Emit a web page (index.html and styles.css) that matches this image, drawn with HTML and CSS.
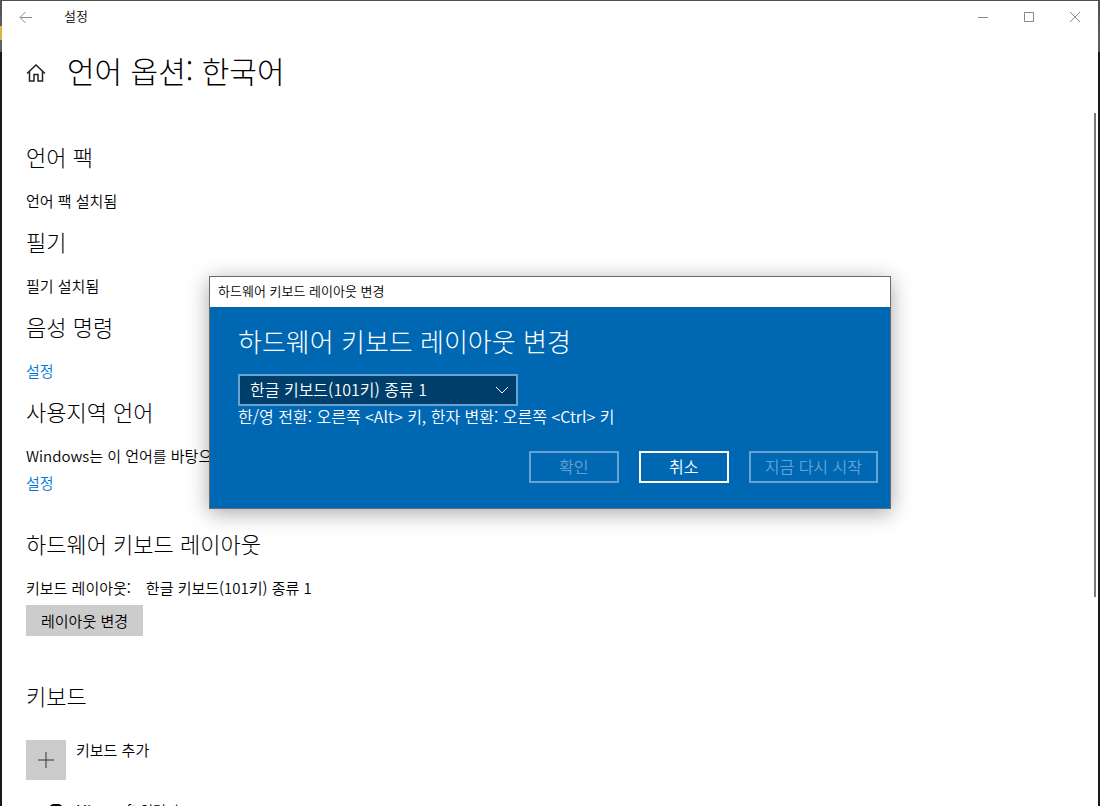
FILE: index.html
```
<!DOCTYPE html>
<html lang="ko">
<head>
    <meta charset="UTF-8">
    <meta name="viewport" content="width=device-width, initial-scale=1.0">
    <title>설정</title>
    <link rel="stylesheet" href="styles.css">
</head>
<body>

<div class="window">
    <header class="titlebar">
        <button type="button" class="back" aria-label="뒤로">
            <svg width="14" height="12" viewBox="0 0 14 12"><path d="M13 6.500H1.500M6.500 1L1 6.500L6.500 12"/></svg>
        </button>
        <span class="app-name">설정</span>
        <div class="window-buttons">
            <button type="button" aria-label="최소화">
                <svg width="10" height="10" viewBox="0 0 10 10"><path d="M0 5.500h10"/></svg>
            </button>
            <button type="button" aria-label="최대화">
                <svg width="10" height="10" viewBox="0 0 10 10"><path d="M.5.5h9v9h-9z"/></svg>
            </button>
            <button type="button" aria-label="닫기">
                <svg width="10" height="10" viewBox="0 0 10 10"><path d="M0 0l10 10M10 0L0 10"/></svg>
            </button>
        </div>
    </header>

    <div class="page-title">
        <svg class="home" width="20" height="18" viewBox="0 0 20 18"><path d="M1 9.500L10 1l9 8.500M3.500 7.500V17h4.500v-6.500h4V17h4.500V7.500"/></svg>
        <h1>언어 옵션: 한국어</h1>
    </div>

    <main class="content">
        <section>
            <h2>언어 팩</h2>
            <p>언어 팩 설치됨</p>
        </section>
        <section>
            <h2>필기</h2>
            <p>필기 설치됨</p>
        </section>
        <section>
            <h2>음성 명령</h2>
            <p><a href="#">설정</a></p>
        </section>
        <section class="region">
            <h2>사용지역 언어</h2>
            <p>Windows는 이 언어를 바탕으로</p>
            <p><a href="#">설정</a></p>
        </section>
        <section class="hardware">
            <h2>하드웨어 키보드 레이아웃</h2>
            <p><span class="label">키보드 레이아웃:</span>한글 키보드(101키) 종류 1</p>
            <button type="button" class="change">레이아웃 변경</button>
        </section>
        <section class="keyboards">
            <h2>키보드</h2>
            <div class="keyboard-row">
                <button type="button" class="add" id="addKeyboard" aria-label="키보드 추가">
                    <svg width="16" height="16" viewBox="0 0 16 16"><path d="M8 0v16M0 8h16"/></svg>
                </button>
                <label for="addKeyboard">키보드 추가</label>
            </div>
            <div class="keyboard-row ime">
                <span class="ime-icon"></span>
                <span>Microsoft 입력기</span>
            </div>
        </section>
    </main>
    <div class="scrollbar"></div>
</div>

<div class="dialog" role="dialog" aria-labelledby="dialogTitle">
    <div class="dialog-bar">하드웨어 키보드 레이아웃 변경</div>
    <form class="dialog-body">
        <h2 id="dialogTitle">하드웨어 키보드 레이아웃 변경</h2>
        <div class="select-wrap">
            <select id="layout" aria-labelledby="dialogTitle">
                <option>한글 키보드(101키) 종류 1</option>
            </select>
            <svg class="chevron" width="14" height="8" viewBox="0 0 14 8"><path d="M1 1l6 6 6-6"/></svg>
        </div>
        <p>한/영 전환: 오른쪽 &lt;Alt&gt; 키, 한자 변환: 오른쪽 &lt;Ctrl&gt; 키</p>
        <div class="actions">
            <button type="button" disabled>확인</button>
            <button type="button">취소</button>
            <button type="button" disabled>지금 다시 시작</button>
        </div>
    </form>
</div>

</body>
</html>
```
FILE: styles.css
```
* {
    box-sizing: border-box;
}

body {
    height: 100vh;
    margin: 0;
    padding: 1px 2px 0;
    overflow: hidden;
    background: linear-gradient(#505050 0, #606060 26px, #d9b44a 26px, #d9b44a 40px, #606060 40px, #606060 52px, #17181a 52px) left / 2px 100% no-repeat,
        linear-gradient(#505050 0, #606060 52px, #17181a 52px);
    color: #000;
    font-family: "Noto Sans CJK KR", sans-serif;
    font-size: 15px;
    font-weight: 350;
    line-height: 27px;
}

h1,
h2,
p {
    margin: 0;
    font-weight: 350;
}

h1,
h2 {
    font-weight: 300;
}

button,
select {
    padding: 0;
    border: 0;
    font: inherit;
}

svg {
    display: block;
    fill: none;
    stroke: currentColor;
}

a {
    color: #0078d7;
    text-decoration: none;
}

.window {
    position: relative;
    height: 100%;
    overflow: hidden;
    background: #fff;
}

.titlebar {
    display: flex;
    align-items: center;
    height: 32px;
    color: #999;
}

.back {
    display: flex;
    align-items: center;
    justify-content: center;
    width: 48px;
    height: 32px;
    background: none;
    color: #888;
}

.app-name {
    margin-left: 14px;
    color: #000;
    font-size: 13px;
    line-height: 20px;
    padding-bottom: 2px;
}

.window-buttons {
    display: flex;
    margin-left: auto;
}

.window-buttons button {
    display: flex;
    align-items: center;
    justify-content: center;
    width: 46px;
    height: 32px;
    background: none;
    color: #888;
}

.page-title {
    display: flex;
    align-items: center;
    gap: 21px;
    height: 76px;
    padding: 0 24px;
}

.home {
    margin-top: 4px;
    color: #222;
    stroke-width: 1.5;
}

h1 {
    padding-bottom: 2px;
    font-size: 30px;
    line-height: 44px;
}

.content {
    padding: 32px 24px 0;
}

.content section {
    padding-bottom: 12px;
}

.content h2 {
    margin-bottom: 16px;
    font-size: 22px;
    line-height: 30px;
}

.content .region {
    padding-bottom: 32px;
}

.content .hardware {
    padding-bottom: 44px;
}

.content p {
    white-space: nowrap;
}

.label {
    margin-right: 15px;
}

.change {
    display: block;
    height: 31px;
    margin-top: 4px;
    padding: 0 15px;
    background: #ccc;
    color: #000;
}

.content .keyboards h2 {
    margin-bottom: 30px;
}

.keyboard-row {
    display: flex;
    gap: 10px;
    height: 40px;
    margin-bottom: 20px;
    line-height: 20px;
}

.add {
    display: flex;
    align-items: center;
    justify-content: center;
    width: 40px;
    height: 40px;
    background: #ccc;
    color: #333;
}

.ime {
    font-size: 14px;
}

.ime-icon {
    width: 14px;
    height: 14px;
    margin: 4px 3px 0 23px;
    border-radius: 5px;
    background: #000;
}

.scrollbar {
    position: absolute;
    top: 112px;
    right: 2px;
    width: 2px;
    height: 60vh;
    background: #7a7a7a;
}

.dialog {
    position: absolute;
    top: 276px;
    left: 50%;
    width: 682px;
    transform: translateX(-50%);
    border: 1px solid #6b6b6b;
    background: #0067b3;
    box-shadow: 0 4px 20px rgba(0, 0, 0, 0.35);
}

.dialog-bar {
    height: 30px;
    padding-left: 8px;
    background: #fff;
    font-size: 13px;
    line-height: 27px;
}

.dialog-body {
    padding: 16px 12px 25px 28px;
    color: #fff;
    font-size: 16px;
}

.dialog-body h2 {
    margin-bottom: 15px;
    font-size: 26px;
    line-height: 36px;
}

.select-wrap {
    position: relative;
    width: 280px;
}

.select-wrap select {
    display: block;
    width: 100%;
    height: 32px;
    padding: 0 10px 2px;
    appearance: none;
    border: 2px solid #66a3d1;
    background: #003e6b;
    color: #fff;
    line-height: 26px;
}

.chevron {
    position: absolute;
    top: 12px;
    right: 9px;
    pointer-events: none;
}

.dialog-body p {
    line-height: 20px;
}

.actions {
    display: flex;
    justify-content: flex-end;
    gap: 20px;
    margin-top: 25px;
}

.actions button {
    min-width: 90px;
    height: 32px;
    padding: 0 14px 2px;
    border: 2px solid #fff;
    background: none;
    color: #fff;
    line-height: 26px;
}

.actions button:disabled {
    border-color: #66a3d1;
    color: #66a3d1;
}
```
